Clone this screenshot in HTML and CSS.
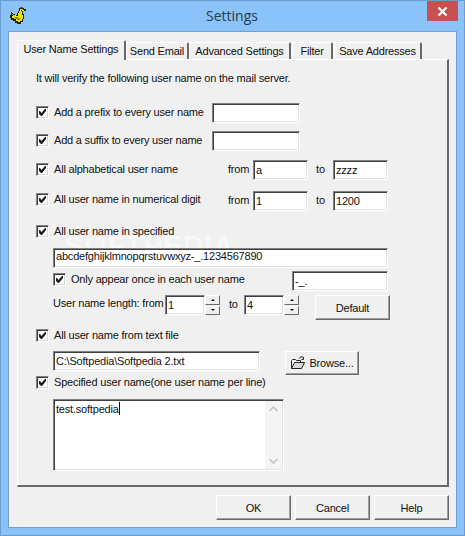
FILE: index.html
```html
<!DOCTYPE html>
<html>
<head>
    <title>Settings</title>
    <link rel="stylesheet" href="styles.css">
</head>
<body>
    <svg class="defs" width="0" height="0">
        <symbol id="tick" viewBox="0 0 9 9">
            <path d="M1 3v3l2 2h1l4-5V1H7L3.500 5 2 3z" fill="#1a1a1a"/>
        </symbol>
    </svg>

    <div class="window">
        <div class="titlebar">
            <svg class="app-icon" width="16" height="17" viewBox="0 0 16 17" shape-rendering="crispEdges">
                <path d="M9 1h5v1h2v2h-3v3h1v5h-1v3h-2v2H7v-1H5v-2H3v-1H1v-2H0V8h1V5h1v1h1v1h2v1h2V6h1V4h1V3H9z" fill="#23220c"/>
                <path d="M10 2h3v1h1v1h-2v4h1v4h-1v2h-2v1H8v-1H6v-2H4v-1H2V9h1V8h3v1h2V6h1V4h1z" fill="#e6e00e"/>
                <path d="M5 10h3v1h2v2H8v-1H5zM2 7h1v1H2z" fill="#8c8612"/>
                <path d="M11 3h1v1h-1z" fill="#23220c"/>
                <path d="M10 0h3v1h-3z" fill="#a0308a"/>
            </svg>
            <div class="title">Settings</div>
            <div class="close">
                <svg width="11" height="11" viewBox="0 0 11 11"><path d="M1.500 1.500l8 8M9.500 1.500l-8 8" stroke="#fff" stroke-width="2.200"/></svg>
            </div>
        </div>

        <div class="client">
            <!-- вкладки -->
            <div class="tabs">
                <div class="tab active tab-user">User Name Settings</div>
                <div class="tab tab-mail">Send Email</div>
                <div class="tab tab-adv">Advanced Settings</div>
                <div class="tab tab-filter">Filter</div>
                <div class="tab tab-save">Save Addresses</div>
            </div>

            <div class="page">
                <div class="watermark">SOFTPEDIA</div>

                <div class="row row-intro">It will verify the following user name on the mail server.</div>

                <div class="row row-prefix">
                    <span class="check"><svg><use href="#tick"/></svg></span>
                    <span class="label label-short">Add a prefix to every user name</span>
                    <div class="field field-affix"></div>
                </div>
                <div class="row row-suffix">
                    <span class="check"><svg><use href="#tick"/></svg></span>
                    <span class="label label-short">Add a suffix to every user name</span>
                    <div class="field field-affix"></div>
                </div>
                <div class="row row-alpha">
                    <span class="check"><svg><use href="#tick"/></svg></span>
                    <span class="label label-long">All alphabetical user name</span>
                    <span class="word-from">from</span>
                    <div class="field field-range">a</div>
                    <span class="word-to">to</span>
                    <div class="field field-range">zzzz</div>
                </div>
                <div class="row row-num">
                    <span class="check"><svg><use href="#tick"/></svg></span>
                    <span class="label label-long">All user name in numerical digit</span>
                    <span class="word-from">from</span>
                    <div class="field field-range">1</div>
                    <span class="word-to">to</span>
                    <div class="field field-range">1200</div>
                </div>
                <div class="row row-spec">
                    <span class="check"><svg><use href="#tick"/></svg></span>
                    <span class="label">All user name in specified</span>
                </div>

                <div class="sub">
                    <div class="field field-chars">abcdefghijklmnopqrstuvwxyz-_.1234567890</div>
                    <div class="row row-once">
                        <span class="check"><svg><use href="#tick"/></svg></span>
                        <span class="label label-once">Only appear once in each user name</span>
                        <div class="field field-sep">-_.</div>
                    </div>
                    <div class="row row-len">
                        <span class="len-text">User name length: from</span>
                        <div class="field field-spin">1</div>
                        <div class="spin">
                            <div class="spin-btn"><i class="arrow-up"></i></div>
                            <div class="spin-btn"><i class="arrow-down"></i></div>
                        </div>
                        <span class="len-to">to</span>
                        <div class="field field-spin">4</div>
                        <div class="spin">
                            <div class="spin-btn"><i class="arrow-up"></i></div>
                            <div class="spin-btn"><i class="arrow-down"></i></div>
                        </div>
                        <div class="btn btn-default">Default</div>
                    </div>
                </div>

                <div class="row row-file">
                    <span class="check"><svg><use href="#tick"/></svg></span>
                    <span class="label">All user name from text file</span>
                </div>
                <div class="sub row-path">
                    <div class="field field-path">C:\Softpedia\Softpedia 2.txt</div>
                    <div class="btn btn-browse">
                        <svg width="16" height="14" viewBox="0 0 16 14">
                            <path d="M1.500 12.500v-8l1-1h3l1 1h4v2" fill="none" stroke="#222"/>
                            <path d="M1.500 12.500l3-6h10l-3 6z" fill="#d8d8d8" stroke="#222"/>
                            <path d="M9 2.500c1-2 3-2 4.500-1M13.500 1v2.500h-2" fill="none" stroke="#222"/>
                        </svg>
                        Browse...
                    </div>
                </div>
                <div class="row row-list">
                    <span class="check"><svg><use href="#tick"/></svg></span>
                    <span class="label">Specified user name(one user name per line)</span>
                </div>
                <div class="sub">
                    <div class="field field-list">
                        <div class="list-text">test.softpedia<span class="caret"></span></div>
                        <div class="scrollbar">
                            <svg width="9" height="6" viewBox="0 0 9 6"><path d="M.5 5l4-4 4 4" fill="none" stroke="#c4c4c4" stroke-width="1.600"/></svg>
                            <svg width="9" height="6" viewBox="0 0 9 6"><path d="M.5 1l4 4 4-4" fill="none" stroke="#c4c4c4" stroke-width="1.600"/></svg>
                        </div>
                    </div>
                </div>
            </div>

            <div class="footer">
                <div class="btn btn-foot">OK</div>
                <div class="btn btn-foot">Cancel</div>
                <div class="btn btn-foot">Help</div>
            </div>
        </div>
    </div>
</body>
</html>
```

FILE: styles.css
```css
html, body {
    margin: 0;
    padding: 0;
}

body {
    width: 465px;
    height: 536px;
    overflow: hidden;
    font-family: "Liberation Sans", Arial, sans-serif;
    font-size: 11px;
    letter-spacing: -0.2px;
    color: #111;
}

.defs {
    display: block;
    height: 0;
}

.window {
    width: 465px;
    height: 536px;
    box-sizing: border-box;
    background: #8ac3f9;
    border: 1px solid #6b9ccc;
    padding: 0 7px 7px 7px;
    display: flex;
    flex-direction: column;
}

.titlebar {
    height: 30px;
    flex: none;
    display: flex;
    align-items: flex-start;
    position: relative;
}

.app-icon {
    margin: 6px 0 0 2px;
}

.title {
    position: absolute;
    left: 198px;
    top: 5px;
    font-family: "Open Sans", sans-serif;
    font-size: 14px;
    line-height: 20px;
    letter-spacing: 0;
    color: #2b3a4a;
}

.close {
    margin-left: auto;
    width: 31px;
    height: 20px;
    margin-right: -1px;
    background: #c75050;
    display: flex;
    align-items: center;
    justify-content: center;
}

.client {
    flex: 1;
    background: #f0f0f0;
    border: 1px solid #6f9fd0;
    padding: 8px 8px 0 8px;
}

/* вкладки */
.tabs {
    display: flex;
    height: 19px;
    align-items: flex-end;
    position: relative;
    z-index: 1;
}

.tab {
    box-sizing: border-box;
    height: 17px;
    border-top: 1px solid #fff;
    border-left: 1px solid #fff;
    border-right: 2px solid #696969;
    border-radius: 2px 2px 0 0;
    text-align: center;
    line-height: 17px;
    white-space: nowrap;
}

.tab.active {
    height: 20px;
    margin-bottom: -1px;
    background: #f0f0f0;
    line-height: 16px;
    padding-bottom: 3px;
}

.tab-user { width: 109px; }
.tab-mail { width: 63px; }
.tab-adv { width: 102px; }
.tab-filter { width: 41px; margin-left: 1px; }
.tab-save { width: 88px; margin-left: 1px; }

.page {
    box-sizing: border-box;
    width: 432px;
    height: 428px;
    border-top: 1px solid #fff;
    border-left: 1px solid #fff;
    border-right: 2px solid #696969;
    border-bottom: 2px solid #696969;
    padding: 0 0 0 18px;
    position: relative;
}

.watermark {
    position: absolute;
    left: 47px;
    top: 170px;
    font-size: 28px;
    font-weight: bold;
    letter-spacing: 1px;
    color: #f7f7f7;
}

.row {
    display: flex;
    align-items: center;
    position: relative;
}

.row-intro { height: 20px; margin-top: 8px; }
.row-prefix { height: 20px; margin-top: 15px; }
.row-suffix { height: 20px; margin-top: 8px; }
.row-alpha { height: 20px; margin-top: 9px; }
.row-num { height: 20px; margin-top: 11px; }
.row-spec { height: 16px; margin-top: 13px; }
.row-file { height: 16px; margin-top: 8px; }
.row-list { height: 16px; }
.row-once { height: 20px; margin-top: 3px; }
.row-len { height: 25px; margin-top: 4px; align-items: flex-start; }

.check {
    box-sizing: border-box;
    width: 13px;
    height: 13px;
    flex: none;
    background: #fff;
    border: 1px solid;
    border-color: #808080 #fff #fff #808080;
    box-shadow: inset 1px 1px 0 #404040, inset -1px -1px 0 #d8d8d8;
    padding: 1px;
    margin-right: 5px;
    margin-bottom: 2px;
}

.check svg {
    display: block;
    width: 9px;
    height: 9px;
}

.label, .word-from {
    margin-bottom: 2px;
}

.row-num .check, .row-num .label,
.row-once .check, .row-once .label {
    margin-bottom: 4px;
}

.label-short { width: 158px; }
.label-long { width: 174px; }
.label-once { width: 221px; }

.word-from { width: 25px; }
.word-to { width: 25px; text-align: center; margin-bottom: 2px; }

.field {
    box-sizing: border-box;
    height: 20px;
    background: #fff;
    border: 1px solid;
    border-color: #808080 #fff #fff #808080;
    box-shadow: inset 1px 1px 0 #404040, inset -1px -1px 0 #e3e3e3;
    padding: 2px 0 0 2px;
    line-height: 15px;
    white-space: nowrap;
}

.field-affix { width: 88px; }
.field-range { width: 55px; }
.sub { margin: 0 0 0 17px; position: relative; }
.field-chars { width: 335px; margin-top: 8px; padding-top: 0; }
.field-sep { width: 96px; }
.field-spin { width: 40px; }
.field-path { width: 207px; }

.row-path {
    display: flex;
    align-items: flex-start;
    margin-top: 7px;
    height: 24px;
}

.len-text { width: 112px; white-space: nowrap; line-height: 16px; }
.len-to { width: 24px; padding-left: 9px; box-sizing: border-box; line-height: 18px; }

.spin {
    width: 15px;
    height: 20px;
    display: flex;
    flex-direction: column;
    gap: 1px;
}

.spin-btn {
    box-sizing: border-box;
    flex: 1;
    background: #f0f0f0;
    border: 1px solid;
    border-color: #fff #696969 #696969 #fff;
    display: flex;
    align-items: center;
    justify-content: center;
}

.arrow-up, .arrow-down {
    width: 0;
    height: 0;
    border-left: 2px solid transparent;
    border-right: 2px solid transparent;
}

.arrow-up { border-bottom: 2px solid #111; }
.arrow-down { border-top: 2px solid #111; }

.btn {
    box-sizing: border-box;
    display: flex;
    align-items: center;
    justify-content: center;
    background: #f0f0f0;
    border: 1px solid;
    border-color: #fff #696969 #696969 #fff;
    box-shadow: inset -1px -1px 0 #a0a0a0;
}

.btn-default {
    width: 75px;
    height: 25px;
    margin-left: 16px;
}

.btn-browse {
    width: 74px;
    height: 24px;
    margin-left: 25px;
    gap: 3px;
}

.field-list {
    width: 231px;
    height: 72px;
    margin-top: 8px;
    padding: 0;
    display: flex;
    justify-content: space-between;
    line-height: normal;
}

.list-text { padding: 2px 0 0 2px; }

.caret {
    display: inline-block;
    width: 1px;
    height: 13px;
    background: #111;
    vertical-align: -2px;
}

.scrollbar {
    width: 17px;
    margin: 1px 1px 1px 0;
    background: #f4f4f4;
    display: flex;
    flex-direction: column;
    justify-content: space-between;
    align-items: center;
    padding: 5px 0;
    box-sizing: border-box;
}

.footer {
    display: flex;
    justify-content: flex-end;
    gap: 4px;
    width: 432px;
    margin-top: 8px;
}

.btn-foot {
    width: 75px;
    height: 25px;
}
```
